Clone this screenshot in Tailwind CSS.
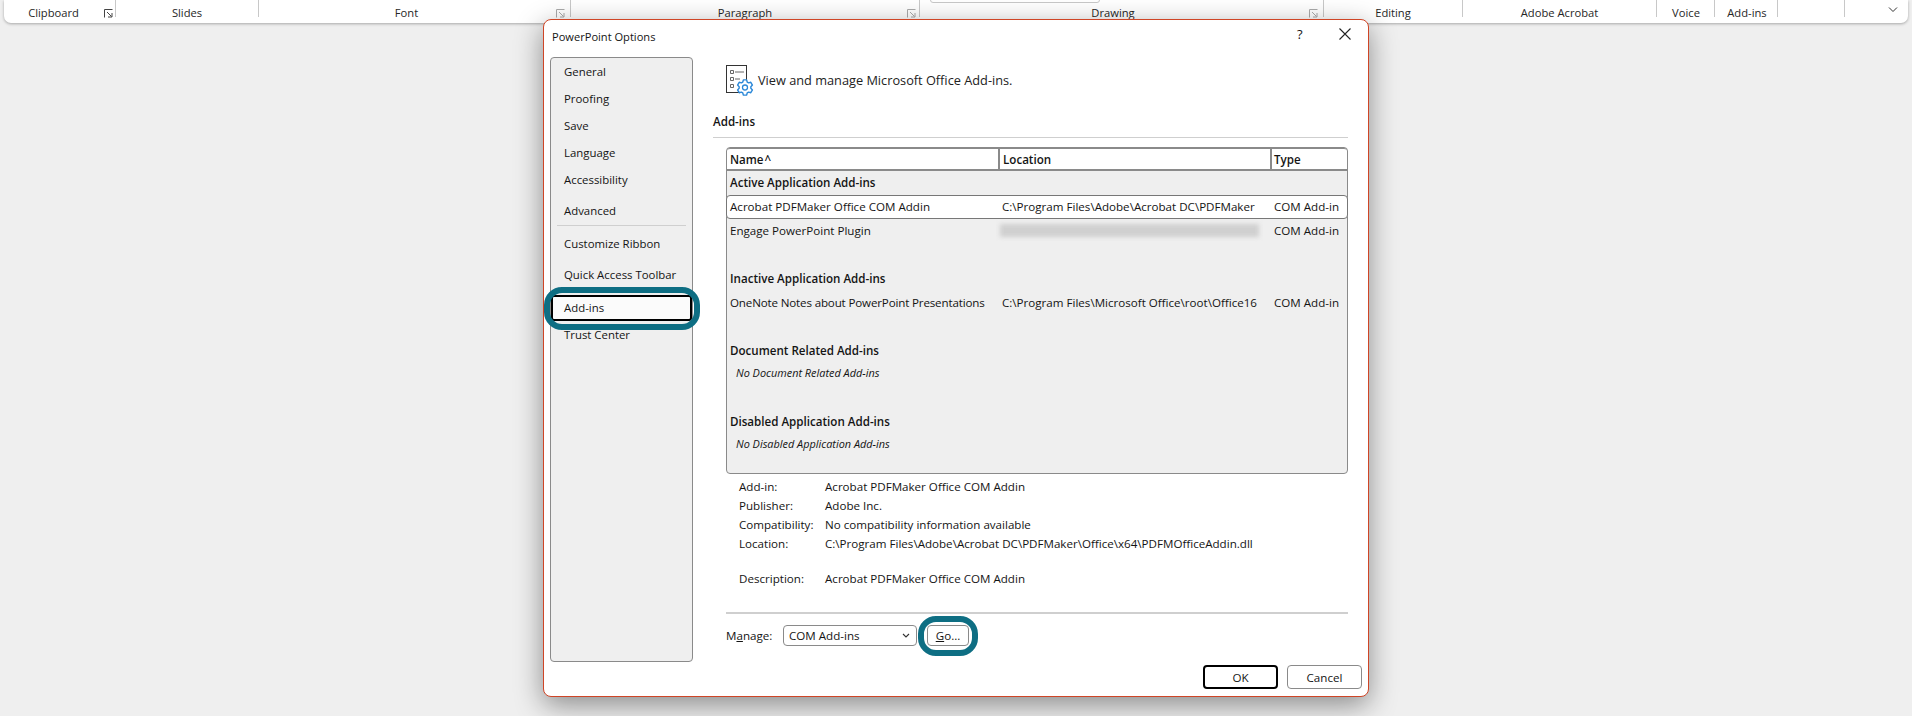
<!DOCTYPE html>
<html lang="en">

<head>
    <meta charset="UTF-8">
    <meta name="viewport" content="width=device-width, initial-scale=1.0">
    <title>PowerPoint Options</title>
    <script src="https://cdn.jsdelivr.net/npm/@tailwindcss/browser@4"></script>
</head>

<body class="bg-[#efefef] h-[716px] w-[1912px] overflow-hidden relative font-['Open_Sans',sans-serif] text-[11.6px] text-[#141414]">

    <!-- ribbon, only its bottom strip is visible -->
    <div class="mx-[4px] h-[23px] bg-white rounded-b-[7px] shadow-[0_1px_3px_rgba(0,0,0,0.3)] flex text-[11.2px] text-[#262626] relative">
        <div class="w-[112px] h-[17px] border-r border-[#c8c8c8] flex items-start justify-center pt-[5px] pr-[12px] leading-[16px] relative">Clipboard
            <svg class="absolute left-[100px] top-[9px]" width="9" height="9" viewBox="0 0 9 9" fill="none" stroke="#444"><path d="M.5 8.5V.5h8M3 3l4.5 4.5M8 4v4H4" /></svg>
        </div>
        <div class="w-[143px] h-[17px] border-r border-[#c8c8c8] flex items-start justify-center pt-[5px] leading-[16px]">Slides</div>
        <div class="w-[312px] h-[17px] border-r border-[#c8c8c8] flex items-start justify-center pt-[5px] pr-[16px] leading-[16px] relative">Font
            <svg class="absolute left-[297px] top-[9px]" width="9" height="9" viewBox="0 0 9 9" fill="none" stroke="#aaa"><path d="M.5 8.5V.5h8M3 3l4.5 4.5M8 4v4H4" /></svg>
        </div>
        <div class="w-[349px] h-[17px] border-r border-[#c8c8c8] flex items-start justify-center pt-[5px] leading-[16px] relative">Paragraph
            <svg class="absolute left-[336px] top-[9px]" width="9" height="9" viewBox="0 0 9 9" fill="none" stroke="#aaa"><path d="M.5 8.5V.5h8M3 3l4.5 4.5M8 4v4H4" /></svg>
        </div>
        <div class="w-[404px] h-[17px] border-r border-[#c8c8c8] flex items-start justify-center pt-[5px] pr-[17px] leading-[16px] relative">Drawing
            <svg class="absolute left-[389px] top-[9px]" width="9" height="9" viewBox="0 0 9 9" fill="none" stroke="#aaa"><path d="M.5 8.5V.5h8M3 3l4.5 4.5M8 4v4H4" /></svg>
            <span class="absolute left-[10px] -top-[8px] w-[170px] h-[11px] border border-[#c8c8c8] rounded-[3px]"></span>
        </div>
        <div class="w-[139px] h-[17px] border-r border-[#c8c8c8] flex items-start justify-center pt-[5px] leading-[16px]">Editing</div>
        <div class="w-[194px] h-[17px] border-r border-[#c8c8c8] flex items-start justify-center pt-[5px] leading-[16px]">Adobe Acrobat</div>
        <div class="w-[58px] h-[17px] border-r border-[#c8c8c8] flex items-start justify-center pt-[5px] pl-[1px] leading-[16px]">Voice</div>
        <div class="w-[63px] h-[17px] border-r border-[#c8c8c8] flex items-start justify-center pt-[5px] pl-[2px] leading-[16px]">Add-ins</div>
        <div class="w-[67px] h-[17px] border-r border-[#c8c8c8]"></div>
        <div class="flex-1 flex justify-end pt-[7px] pr-[10px]">
            <svg width="10" height="6" viewBox="0 0 10 6" fill="none" stroke="#333" stroke-width="1"><path d="M1 .5l4 4 4-4" /></svg>
        </div>
    </div>

    <!-- dialog -->
    <div class="absolute left-[543px] top-[19px] w-[826px] h-[678px] bg-white border border-[#cf4526] rounded-[8px] shadow-[0_8px_28px_rgba(0,0,0,0.42)]">
        <div class="h-[37px] flex items-center pl-[8px] relative pb-[3px]">
            <span class="text-[11.1px]">PowerPoint Options</span>
            <span class="absolute left-[753px] top-[5px] text-[13px]">?</span>
            <svg class="absolute left-[795px] top-[8px]" width="12" height="12" viewBox="0 0 12 12" stroke="#222" stroke-width="1.1"><path d="M.5.5l11 11M11.5.5l-11 11" /></svg>
        </div>

        <div class="flex">
            <!-- side nav -->
            <div class="ml-[6px] w-[143px] h-[605px] bg-[#efefef] border border-[#8a8a8a] rounded-[4px] shrink-0 text-[11.4px]">
                <div class="h-[27px] flex items-center pl-[13px]">General</div>
                <div class="h-[27px] flex items-center pl-[13px]">Proofing</div>
                <div class="h-[27px] flex items-center pl-[13px]">Save</div>
                <div class="h-[27px] flex items-center pl-[13px]">Language</div>
                <div class="h-[27px] flex items-center pl-[13px]">Accessibility</div>
                <div class="h-[27px] flex items-center pl-[13px] mt-[4px]">Advanced</div>
                <div class="h-px bg-[#cfcfcf] mx-[6px] mt-[1px]"></div>
                <div class="h-[27px] flex items-center pl-[13px] mt-[4px]">Customize Ribbon</div>
                <div class="h-[27px] flex items-center pl-[13px] mt-[4px]">Quick Access Toolbar</div>
                <div class="h-[26px] flex items-center pl-[11px] mt-[7px] bg-[#fbfbfb] border-2 border-black rounded-[3px] relative">Add-ins
                    <span class="absolute -left-[9px] -top-[10px] w-[156px] h-[43px] border-[6px] border-[#0e6e83] rounded-[18px]"></span>
                </div>
                <div class="h-[27px] flex items-center pl-[13px]">Trust Center</div>
            </div>

            <!-- main column -->
            <div class="ml-[20px] w-[635px]">
                <div class="flex items-start ml-[13px] mt-[8px] h-[29px]">
                    <svg class="shrink-0" width="28" height="32" viewBox="0 0 28 32" fill="none">
                        <rect x=".5" y=".5" width="20" height="27" stroke="#333" />
                        <path d="M4.5 5.5h3v3h-3zM4.5 12.5h3v3h-3zM4.5 19.5h3v3h-3z" stroke="#666" />
                        <path d="M9 7h9M9 14h5" stroke="#666" />
                        <g transform="translate(19 22.5)">
                            <polygon fill="white" stroke="#2b88d8" stroke-width="1.4" stroke-linejoin="round" points="-2.21,-5.47 -1.62,-7.63 1.62,-7.63 2.21,-5.47 3.63,-4.65 5.8,-5.22 7.42,-2.41 5.84,-.82 5.84,.82 7.42,2.41 5.8,5.22 3.63,4.65 2.21,5.47 1.62,7.63 -1.62,7.63 -2.21,5.47 -3.63,4.65 -5.8,5.22 -7.42,2.41 -5.84,.82 -5.84,-.82 -7.42,-2.41 -5.8,-5.22 -3.63,-4.65" />
                            <circle r="2.5" stroke="#2b88d8" stroke-width="1.3" />
                        </g>
                    </svg>
                    <span class="ml-[4px] mt-[6px] text-[12.75px] leading-[18px] text-[#222]">View and manage Microsoft Office Add-ins.</span>
                </div>
                <div class="mt-[19px] font-semibold leading-[18px]">Add-ins</div>
                <div class="mt-[6px] h-px bg-[#cfcfcf]"></div>

                <!-- add-ins list -->
                <div class="ml-[13px] mt-[9px] w-[622px] h-[327px] bg-[#efefef] border border-[#8a8a8a] rounded-[4px] relative whitespace-nowrap">
                    <div class="flex h-[23px] bg-white border-b-2 border-t border-[#8a8a8a] font-semibold rounded-t-[3px]">
                        <div class="w-[273px] pl-[3px] border-r-2 border-[#8a8a8a] leading-[21px]">Name <span class="-ml-[2px]">^</span></div>
                        <div class="w-[272px] pl-[3px] border-r-2 border-[#8a8a8a] leading-[21px]">Location</div>
                        <div class="flex-1 pl-[2px] leading-[21px]">Type</div>
                    </div>
                    <div class="h-[24px] flex items-center pl-[3px] font-semibold">Active Application Add-ins</div>
                    <div class="h-[24px] flex items-center bg-white border border-[#777] rounded-[4px] -mx-px -mt-[0.5px]">
                        <div class="w-[273px] pl-[3px]">Acrobat PDFMaker Office COM Addin</div>
                        <div class="w-[272px] pl-[2px]">C:\Program Files\Adobe\Acrobat DC\PDFMaker</div>
                        <div class="pl-[2px]">COM Add-in</div>
                    </div>
                    <div class="h-[24px] flex items-center">
                        <div class="w-[273px] pl-[3px]">Engage PowerPoint Plugin</div>
                        <div class="w-[272px]"><div class="w-[259px] h-[13px] bg-[#d0d0d0] blur-[2px]"></div></div>
                        <div class="pl-[2px]">COM Add-in</div>
                    </div>
                    <div class="h-[24px] mt-[24px] flex items-center pl-[3px] font-semibold">Inactive Application Add-ins</div>
                    <div class="h-[24px] flex items-center">
                        <div class="w-[273px] pl-[3px] tracking-[-0.16px]">OneNote Notes about PowerPoint Presentations</div>
                        <div class="w-[272px] pl-[2px]">C:\Program Files\Microsoft Office\root\Office16</div>
                        <div class="pl-[2px]">COM Add-in</div>
                    </div>
                    <div class="h-[24px] mt-[24px] flex items-center pl-[3px] font-semibold">Document Related Add-ins</div>
                    <div class="h-[22px] flex items-center pl-[9px] italic text-[10.9px]">No Document Related Add-ins</div>
                    <div class="h-[24px] mt-[25px] flex items-center pl-[3px] font-semibold">Disabled Application Add-ins</div>
                    <div class="h-[22px] flex items-center pl-[9px] italic text-[10.9px]">No Disabled Application Add-ins</div>
                </div>

                <!-- details -->
                <div class="ml-[26px] mt-[3px] grid grid-cols-[86px_1fr] auto-rows-[19px] items-center">
                    <div>Add-in:</div><div>Acrobat PDFMaker Office COM Addin</div>
                    <div>Publisher:</div><div>Adobe Inc.</div>
                    <div>Compatibility:</div><div>No compatibility information available</div>
                    <div>Location:</div><div>C:\Program Files\Adobe\Acrobat DC\PDFMaker\Office\x64\PDFMOfficeAddin.dll</div>
                    <div class="mt-[32px]">Description:</div><div class="mt-[32px]">Acrobat PDFMaker Office COM Addin</div>
                </div>

                <div class="mt-[40px] ml-[13px] h-[2px] bg-[#cfcfcf]"></div>
                <div class="ml-[13px] mt-[11px] flex items-center">
                    <span class="w-[57px]">M<span class="underline">a</span>nage:</span>
                    <div class="w-[134px] h-[21px] border border-[#8a8a8a] rounded-[4px] flex items-center justify-between pl-[5px] pr-[6px]">
                        <span>COM Add-ins</span>
                        <svg width="8" height="5" viewBox="0 0 8 5" fill="none" stroke="#333" stroke-width="1.1"><path d="M1 1l3 3 3-3" /></svg>
                    </div>
                    <div class="ml-[10px] w-[42px] h-[21px] border border-[#8a8a8a] rounded-[4px] flex items-center justify-center relative">
                        <span><span class="underline">G</span>o...</span>
                        <span class="absolute -left-[10px] -top-[10px] w-[60px] h-[40px] border-[6px] border-[#0e6e83] rounded-[18px]"></span>
                    </div>
                </div>
            </div>
        </div>

        <!-- ok / cancel -->
        <div class="flex justify-end gap-[9px] pr-[6px] mt-[3px]">
            <div class="w-[75px] h-[24px] border-2 border-black rounded-[4px] flex items-center justify-center pt-[1px]">OK</div>
            <div class="w-[75px] h-[24px] border border-[#8a8a8a] rounded-[4px] flex items-center justify-center pt-[1px]">Cancel</div>
        </div>
    </div>

</body>

</html>
